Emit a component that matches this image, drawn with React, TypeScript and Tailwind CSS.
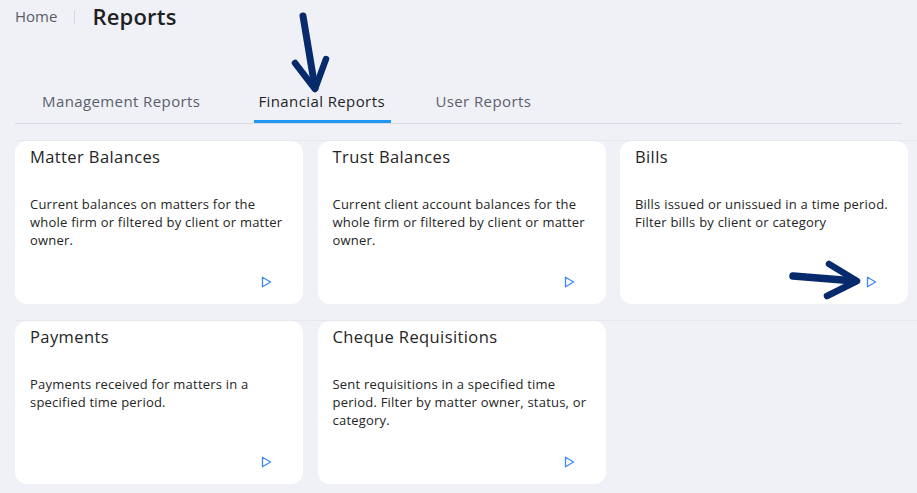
import React from "react";

const font = { fontFamily: '"Open Sans", "Noto Sans", sans-serif' };

function Play() {
  return (
    <svg width="11" height="12" viewBox="0 0 11 12" className="block">
      <path d="M1.5 1.2 L9.6 6 L1.5 10.8 Z" fill="none" stroke="#3d8bf2" strokeWidth="1.3" strokeLinejoin="round" />
    </svg>
  );
}

type Card = { title: string; desc: string };

function ReportCard({ c }: { c: Card }) {
  return (
    <div className="flex h-[163px] w-[288px] flex-col rounded-[12px] bg-white pl-[15px] pr-[10px] pt-[4px]">
      <div className="text-[16.5px] leading-[24px] tracking-[0.4px] text-[#252525]">{c.title}</div>
      <div className="mt-[26px] text-[13px] leading-[18px] tracking-[0.22px] text-[#252525]">{c.desc}</div>
      <div className="mt-auto mb-[16px] mr-[21px] flex justify-end">
        <Play />
      </div>
    </div>
  );
}

const row1: Card[] = [
  { title: "Matter Balances", desc: "Current balances on matters for the whole firm or filtered by client or matter owner." },
  { title: "Trust Balances", desc: "Current client account balances for the whole firm or filtered by client or matter owner." },
  { title: "Bills", desc: "Bills issued or unissued in a time period. Filter bills by client or category" },
];
const row2: Card[] = [
  { title: "Payments", desc: "Payments received for matters in a specified time period." },
  { title: "Cheque Requisitions", desc: "Sent requisitions in a specified time period. Filter by matter owner, status, or category." },
];

export default function App() {
  return (
    <div className="relative h-[493px] w-[917px] overflow-hidden bg-[#eff1f7]" style={font}>
      <div className="flex items-center pl-[15px]">
        <span className="text-[15px] text-[#5a5d66]">Home</span>
        <span className="mx-[17px] h-[14px] w-px bg-[#d6d9e0]" />
        <span className="text-[22px] font-semibold tracking-[0.2px] text-[#1f1f1f]">Reports</span>
      </div>
      <div className="mx-[15px] mt-[57px] flex items-end border-b border-[#d8dbe3]">
        <div className="ml-[12px] px-[15px] pb-[11px] text-[15px] leading-[22px] font-medium tracking-[0.4px] text-[#5b5f6b]">Management Reports</div>
        <div className="ml-[39px] w-[137px] border-b-[3px] border-[#2196f3] pl-[4px] pb-[8px] text-[15px] leading-[22px] font-medium tracking-[0.4px] text-[#1f1f1f]">Financial Reports</div>
        <div className="ml-[40px] px-[4px] pb-[11px] text-[15px] leading-[22px] font-medium tracking-[0.4px] text-[#5b5f6b]">User Reports</div>
      </div>
      <div className="mt-[16px] flex flex-col gap-[16px]">
        <div className="ml-[15px] flex gap-[14.5px] border-t border-[#e6e8ee]">
          {row1.map((c) => (
            <ReportCard key={c.title} c={c} />
          ))}
        </div>
        <div className="ml-[15px] flex gap-[14.5px] border-t border-[#e6e8ee]">
          {row2.map((c) => (
            <ReportCard key={c.title} c={c} />
          ))}
        </div>
      </div>
      <svg className="pointer-events-none absolute left-0 top-0" width="917" height="493">
        <g fill="none" stroke="#062a6c" strokeLinecap="round" strokeLinejoin="round">
          <path d="M303 16 L315 88" strokeWidth="7" />
          <path d="M295 63 L315 89 L326 59" strokeWidth="6.5" />
          <path d="M793 276 L855 281" strokeWidth="7.5" />
          <path d="M829 264 L857 281 L827 296" strokeWidth="6.5" />
        </g>
      </svg>
    </div>
  );
}
